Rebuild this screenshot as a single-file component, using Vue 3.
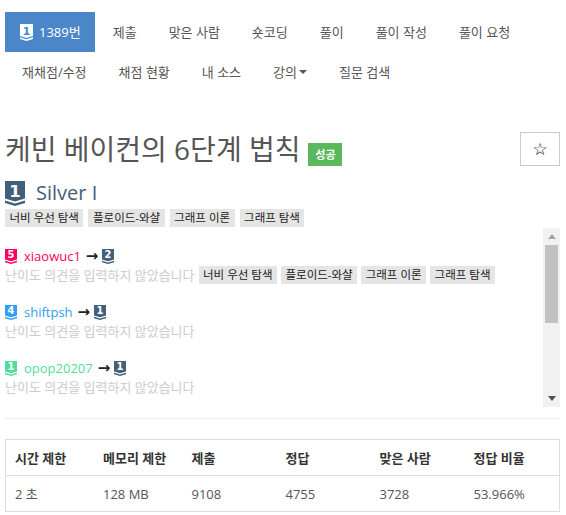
<template>
  <div class="page">
    <ul class="tabs">
      <li v-for="tab in tabs" :key="tab.label" :class="{ active: tab.active }">
        <TierIcon v-if="tab.active" :level="1" color="#ffffff" digit="#4a86c8" :w="13" :h="17" class="tab-icon" />
        {{ tab.label }}<span v-if="tab.caret" class="caret"></span>
      </li>
    </ul>

    <div class="title-row">
      <h1>케빈 베이컨의 6단계 법칙</h1>
      <span class="label-ok">성공</span>
      <button class="star">☆</button>
    </div>

    <div class="tier-row">
      <TierIcon :level="1" color="#435f7a" digit="#ffffff" :w="20" :h="25" />
      <span class="tier-name">Silver I</span>
    </div>
    <div class="tags top-tags">
      <span v-for="t in tags" :key="t" class="tag">{{ t }}</span>
    </div>

    <div class="opinions">
      <div class="opinion-list">
        <div v-for="op in opinions" :key="op.user" class="opinion">
          <div class="who">
            <TierIcon :level="op.level" :color="op.color" digit="#ffffff" :w="12" :h="15" />
            <span class="user" :style="{ color: op.color }">{{ op.user }}</span>
            <span class="arrow">→</span>
            <TierIcon :level="op.to" color="#435f7a" digit="#ffffff" :w="12" :h="15" />
          </div>
          <div class="note">
            <span>난이도 의견을 입력하지 않았습니다</span>
            <span v-for="t in op.tags" :key="t" class="tag">{{ t }}</span>
          </div>
        </div>
      </div>
      <div class="scrollbar">
        <span class="up"></span>
        <div class="track"><div class="thumb"></div></div>
        <span class="down"></span>
      </div>
    </div>

    <hr />

    <table>
      <colgroup>
        <col class="col-a" /><col class="col-a" /><col class="col-b" /><col class="col-b" /><col class="col-b" /><col />
      </colgroup>
      <thead>
        <tr><th v-for="h in headers" :key="h">{{ h }}</th></tr>
      </thead>
      <tbody>
        <tr><td v-for="c in cells" :key="c">{{ c }}</td></tr>
      </tbody>
    </table>
  </div>
</template>

<script setup>
import { h } from 'vue'

const TierIcon = (props) =>
  h('svg', { width: props.w, height: props.h, viewBox: '0 0 20 25', preserveAspectRatio: 'none', style: 'flex:none;display:inline-block' }, [
    h('path', { d: 'M0 0H20V17.5L10 20.5L0 17.5Z', fill: props.color }),
    h('path', { d: 'M0 19.5L10 22.5L20 19.5V22L10 25L0 22Z', fill: props.color }),
    h('text', {
      x: 10,
      y: 15.5,
      'text-anchor': 'middle',
      'font-size': 16.5,
      'font-weight': 700,
      'font-family': '"DejaVu Sans", sans-serif',
      fill: props.digit
    }, String(props.level))
  ])
TierIcon.props = ['level', 'color', 'digit', 'w', 'h']

const tabs = [
  { label: '1389번', active: true },
  { label: '제출' },
  { label: '맞은 사람' },
  { label: '숏코딩' },
  { label: '풀이' },
  { label: '풀이 작성' },
  { label: '풀이 요청' },
  { label: '재채점/수정' },
  { label: '채점 현황' },
  { label: '내 소스' },
  { label: '강의', caret: true },
  { label: '질문 검색' }
]

const tags = ['너비 우선 탐색', '플로이드-와샬', '그래프 이론', '그래프 탐색']

const opinions = [
  { user: 'xiaowuc1', level: 5, to: 2, color: '#ff0062', tags },
  { user: 'shiftpsh', level: 4, to: 1, color: '#2d9ff5', tags: [] },
  { user: 'opop20207', level: 1, to: 1, color: '#51dc9b', tags: [] }
]

const headers = ['시간 제한', '메모리 제한', '제출', '정답', '맞은 사람', '정답 비율']
const cells = ['2 초', '128 MB', '9108', '4755', '3728', '53.966%']
</script>

<style>
html, body {
  margin: 0;
  background: #fff;
}
</style>

<style scoped>
.page {
  width: 555px;
  padding: 12px 0 0 5px;
  font-family: "Open Sans", "Noto Sans CJK KR", sans-serif;
  font-size: 13px;
  line-height: 20px;
  color: #555;
}

.tabs {
  display: flex;
  flex-wrap: wrap;
  list-style: none;
  margin: 0;
  padding: 0;
}

.tabs li {
  display: flex;
  align-items: center;
  height: 40px;
  padding: 0 15px;
  margin-left: 2px;
  color: #555;
}

.tabs li.active {
  margin-left: 0;
  padding: 0 14px 0 15px;
  background: #4a86c8;
  color: #fff;
}

.tabs li.active + li {
  margin-left: 3px;
}

.tab-icon {
  margin-right: 6px;
}

.caret {
  width: 0;
  height: 0;
  margin-left: 2px;
  border-top: 4px solid #555;
  border-left: 4px solid transparent;
  border-right: 4px solid transparent;
}

.title-row {
  display: flex;
  align-items: center;
  height: 34px;
  margin-top: 40px;
}

h1 {
  margin: 0;
  font-size: 28px;
  font-weight: 400;
  line-height: 34px;
  color: #555;
}

.label-ok {
  margin: 11px 0 0 8px;
  width: 34px;
  height: 23px;
  background: #5cb85c;
  color: #fff;
  font-size: 11px;
  font-weight: 700;
  line-height: 23px;
  text-align: center;
}

.star {
  width: 40px;
  height: 34px;
  margin-left: auto;
  padding: 0;
  background: #fff;
  border: 1px solid #ccc;
  font-size: 17px;
  color: #111;
  font-family: "DejaVu Sans", sans-serif;
}

.tier-row {
  display: flex;
  align-items: center;
  gap: 11px;
  height: 25px;
  margin-top: 15px;
  font-size: 20px;
  color: #435f7a;
}

.tier-name {
  margin-top: -2px;
}

.tags {
  display: flex;
  gap: 5px;
}

.top-tags {
  margin-top: 3px;
}

.tag {
  display: inline-block;
  height: 18px;
  padding: 0 4.5px;
  background: #e5e5e5;
  color: #222;
  font-size: 11.5px;
  line-height: 18px;
}

.opinions {
  display: flex;
  height: 179px;
  margin-top: 1px;
}

.opinion-list {
  flex: 1;
  overflow: hidden;
  padding-top: 18px;
}

.opinion {
  height: 56px;
}

.who {
  display: flex;
  align-items: center;
  gap: 3px;
  height: 20px;
}

.user {
  margin: 0 2px 0 4px;
}

.arrow {
  margin-right: 1px;
  color: #222;
  font-family: "DejaVu Sans", sans-serif;
  font-size: 15px;
  font-weight: 700;
}

.note {
  display: flex;
  align-items: center;
  gap: 4px;
  height: 20px;
  margin-top: -1px;
  color: #ccc;
}

.scrollbar {
  display: flex;
  flex-direction: column;
  align-items: center;
  width: 17px;
  background: #f1f1f1;
}

.up, .down {
  flex: none;
  width: 0;
  height: 0;
  border-left: 4px solid transparent;
  border-right: 4px solid transparent;
}

.up {
  margin: 6px 0 6px;
  border-bottom: 5px solid #a3a3a3;
}

.down {
  margin: 6px 0 6px;
  border-top: 5px solid #505050;
}

.track {
  flex: 1;
  width: 100%;
}

.thumb {
  height: 78px;
  margin: 0 2px;
  background: #c1c1c1;
}

hr {
  height: 1px;
  margin: 11px 0 20px;
  border: 0;
  background: #eee;
}

table {
  width: 100%;
  border-collapse: collapse;
  border: 1px solid #ddd;
  table-layout: fixed;
}

.col-a {
  width: 88.5px;
}

.col-b {
  width: 94px;
}

th, td {
  height: 35px;
  padding: 0 9px;
  text-align: left;
  color: #555;
}

th {
  font-weight: 700;
  color: #333;
  border-bottom: 1px solid #ddd;
}
</style>
